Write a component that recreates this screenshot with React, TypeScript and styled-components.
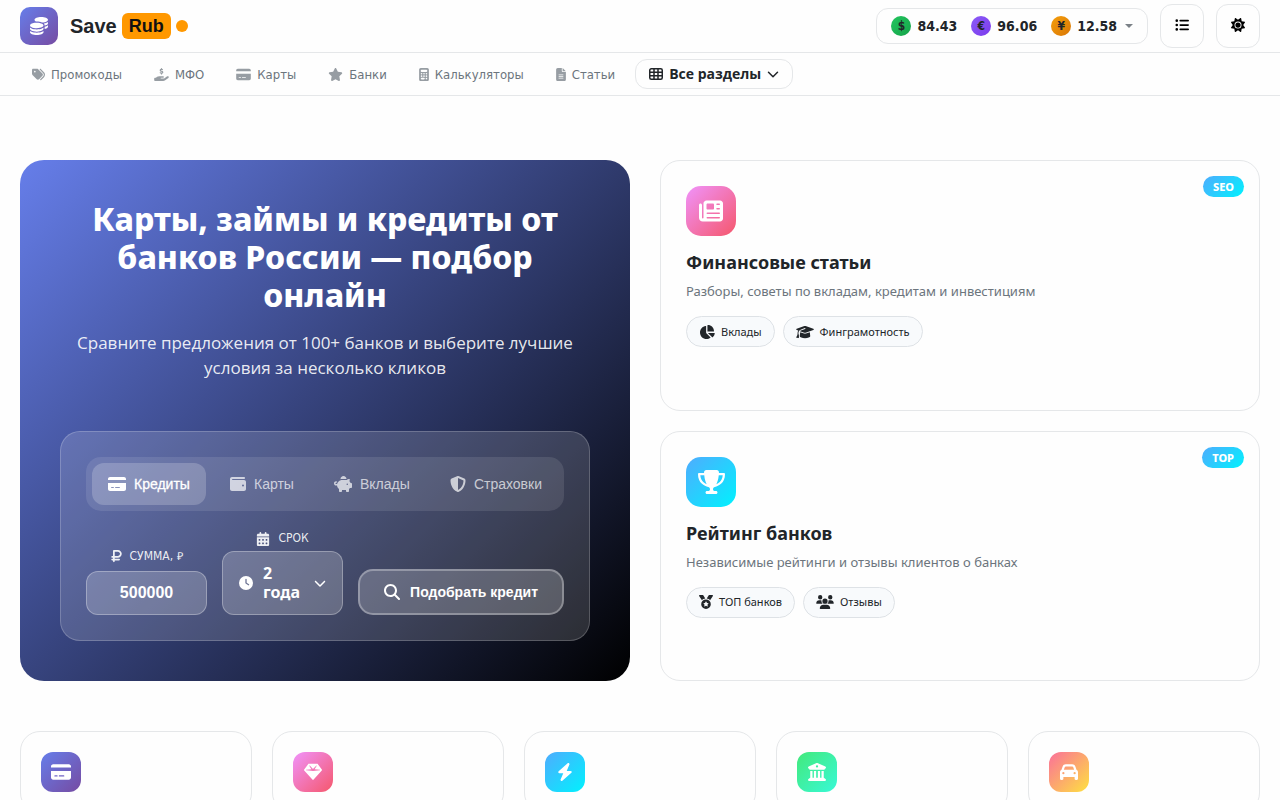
import React, { useState } from "react";
import styled, { createGlobalStyle, css } from "styled-components";
import {
  FaBolt,
  FaBuildingColumns,
  FaCalculator,
  FaCalendarDays,
  FaCar,
  FaChartPie,
  FaChevronDown,
  FaClock,
  FaCoins,
  FaCreditCard,
  FaFileLines,
  FaGem,
  FaGraduationCap,
  FaHandHoldingDollar,
  FaListUl,
  FaMagnifyingGlass,
  FaMedal,
  FaNewspaper,
  FaPiggyBank,
  FaRubleSign,
  FaShieldHalved,
  FaStar,
  FaSun,
  FaTags,
  FaTrophy,
  FaUsers,
  FaWallet,
} from "react-icons/fa6";

const ui = `"DejaVu Sans Condensed", "DejaVu Sans", sans-serif`;
const text = `"Noto Sans", sans-serif`;
const control = `"Liberation Sans", Arial, sans-serif`;

const gradients = {
  violet: "linear-gradient(135deg, #667eea, #764ba2)",
  pink: "linear-gradient(135deg, #f093fb, #f5576c)",
  cyan: "linear-gradient(135deg, #4facfe, #00f2fe)",
  green: "linear-gradient(135deg, #43e97b, #38f9d7)",
  sunset: "linear-gradient(135deg, #fa709a, #fee140)",
};
type Tone = keyof typeof gradients;

const GlobalStyle = createGlobalStyle`
  * { box-sizing: border-box; }
  body { margin: 0; background: #fefefe; color: #212529; font-family: ${ui}; }
  h1, h2, p { margin: 0; }
  a { color: inherit; text-decoration: none; }
  button { cursor: pointer; }
`;

/* Width of an icon's box relative to its height, after the icon's view box. */
const ratios = { narrow: 0.75, square: 1, wide: 1.125, extra: 1.25 };
type Shape = keyof typeof ratios;

const Glyph = styled.span<{ $size: number; $shape?: Shape; $dim?: boolean }>`
  display: inline-flex;
  flex: none;
  opacity: ${(p) => (p.$dim ? 0.7 : 1)};
  svg {
    display: block;
    width: ${(p) => Math.round(p.$size * ratios[p.$shape ?? "square"])}px;
    height: ${(p) => p.$size}px;
  }
`;

const Header = styled.header`
  display: flex;
  align-items: center;
  justify-content: space-between;
  padding: 4px 20px;
  border-bottom: 1px solid #e5e7e9;
`;

const Logo = styled.a`
  display: flex;
  align-items: center;
  font: 700 20px/26px ${control};
`;

const LogoMark = styled.span`
  display: flex;
  align-items: center;
  justify-content: center;
  width: 38px;
  height: 38px;
  margin-right: 12px;
  border-radius: 10px;
  background: ${gradients.violet};
  color: #fff;
`;

const LogoBadge = styled.span`
  margin-left: 5px;
  padding: 0 7px;
  border-radius: 6px;
  background: #ff9800;
  color: #111;
  font-size: 18px;
`;

const LogoDot = styled.span`
  width: 12px;
  height: 12px;
  margin-left: 5px;
  border-radius: 50%;
  background: #ff9800;
`;

const HeaderTools = styled.div`
  display: flex;
  align-items: center;
  gap: 12px;
`;

const outlined = css`
  border: 1px solid #e5e7e9;
  border-radius: 12px;
  background: #fefefe;
`;

const Rates = styled.button`
  ${outlined}
  display: flex;
  align-items: center;
  gap: 14px;
  height: 36px;
  padding: 0 14px;
  color: #212529;
  font: 700 14px/20px ${ui};
`;

const Rate = styled.span`
  display: flex;
  align-items: center;
  gap: 6px;
`;

const Coin = styled.span<{ $color: string }>`
  width: 20px;
  height: 20px;
  border-radius: 50%;
  background: ${(p) => p.$color};
  font-size: 12px;
  text-align: center;
`;

const Caret = styled.span`
  margin-left: -6px;
  border: 4px solid transparent;
  border-top-color: #7b8187;
  border-bottom: 0;
`;

const SquareButton = styled.button`
  ${outlined}
  display: flex;
  align-items: center;
  justify-content: center;
  width: 44px;
  height: 44px;
  padding: 0 0 2px;
  color: #000;
`;

const Nav = styled.nav`
  display: flex;
  align-items: center;
  gap: 8px;
  padding: 6px 20px;
  border-bottom: 1px solid #e5e7e9;
`;

const NavLink = styled.a`
  display: flex;
  align-items: center;
  gap: 6px;
  padding: 1px 12px 0;
  color: #6c757d;
  font-size: 13px;
  line-height: 20px;
`;

const AllSections = styled.button`
  ${outlined}
  display: flex;
  align-items: center;
  gap: 6px;
  height: 30px;
  padding: 0 13px;
  color: #212529;
  font: 700 14px/20px "Open Sans", sans-serif;
`;

const Main = styled.main`
  padding: 64px 20px 30px;
`;

const Intro = styled.section`
  display: grid;
  grid-template-columns: 61fr 60fr;
  gap: 30px;
`;

const Hero = styled.div`
  padding: 40px;
  border-radius: 24px;
  background: linear-gradient(135deg, #667eea, #000);
  color: #fff;
  text-align: center;
`;

const HeroTitle = styled.h1`
  font: 800 32px/38px ${text};
`;

const HeroLead = styled.p`
  margin: 16px 0 51px;
  color: rgba(255, 255, 255, 0.9);
  font: 400 17px/25px "Open Sans", sans-serif;
`;

const Panel = styled.form`
  padding: 25px;
  border: 1px solid rgba(255, 255, 255, 0.2);
  border-radius: 20px;
  background: rgba(255, 255, 255, 0.15);
`;

const Tabs = styled.div`
  display: flex;
  gap: 8px;
  margin-bottom: 20px;
  padding: 6px;
  border-radius: 15px;
  background: rgba(255, 255, 255, 0.1);
`;

const Tab = styled.button<{ $active: boolean }>`
  display: flex;
  flex: 1 1 auto;
  align-items: center;
  justify-content: center;
  gap: 8px;
  height: 42px;
  padding: 0;
  border: 0;
  border-radius: 12px;
  background: ${(p) => (p.$active ? "rgba(255, 255, 255, 0.2)" : "transparent")};
  color: ${(p) => (p.$active ? "#fff" : "rgba(255, 255, 255, 0.7)")};
  font: 400 14px/20px ${control};
  -webkit-text-stroke: ${(p) => (p.$active ? "0.3px #fff" : "0")};
`;

const Fields = styled.div`
  display: grid;
  grid-template-columns: 1fr 1fr auto;
  align-items: end;
  gap: 15px;
`;

const Field = styled.div`
  display: flex;
  flex-direction: column;
  align-items: stretch;
  gap: 5px;
`;

const FieldLabel = styled.label`
  display: flex;
  align-items: center;
  justify-content: center;
  gap: 8px;
  color: rgba(255, 255, 255, 0.9);
  font-size: 12px;
  line-height: 15px;
  text-transform: uppercase;
`;

const Ruble = styled.span`
  font: 400 11px/20px "Liberation Serif", serif;
`;

const frosted = css`
  border: 1px solid rgba(255, 255, 255, 0.3);
  border-radius: 12px;
  background: rgba(255, 255, 255, 0.2);
  color: #fff;
`;

const SumInput = styled.input`
  ${frosted}
  width: 100%;
  height: 44px;
  padding: 0 12px;
  font: 700 16px/20px ${control};
  text-align: center;
`;

const TermButton = styled.button`
  ${frosted}
  display: grid;
  grid-template-columns: auto 1fr auto;
  align-items: center;
  gap: 10px;
  height: 64px;
  padding: 0 16px;
  font: 700 16px/19px ${text};
  text-align: left;
`;

const SubmitButton = styled.button`
  ${frosted}
  display: flex;
  align-items: center;
  gap: 10px;
  height: 46px;
  padding: 0 24px;
  border-width: 2px;
  border-radius: 15px;
  font: 700 14px/20px ${control};
`;

const Side = styled.div`
  display: grid;
  grid-template-rows: 1fr 1fr;
  gap: 20px;
`;

const Card = styled.article`
  position: relative;
  padding: 25px;
  border: 1px solid #e5e7e9;
  border-radius: 20px;
`;

const IconTile = styled.span<{ $tone: Tone; $size: number }>`
  display: flex;
  align-items: center;
  justify-content: center;
  width: ${(p) => p.$size}px;
  height: ${(p) => p.$size}px;
  border-radius: ${(p) => (p.$size > 40 ? 15 : 12)}px;
  background: ${(p) => gradients[p.$tone]};
  color: #fff;
`;

const Badge = styled.span`
  position: absolute;
  top: 15px;
  right: 15px;
  padding: 0 10px;
  border-radius: 12px;
  background: ${gradients.cyan};
  color: #fff;
  font: 800 11px/21px ${text};
`;

const CardTitle = styled.h2`
  margin-top: 15px;
  font: 700 18px/22px ${text};
`;

const CardText = styled.p`
  margin: 8px 0 14px;
  color: #6c757d;
  font: 400 13px/21px ${text};
`;

const Chips = styled.div`
  display: flex;
  flex-wrap: wrap;
  gap: 8px;
`;

const Chip = styled.a`
  display: flex;
  align-items: center;
  gap: 6px;
  height: 31px;
  padding: 0 12px;
  border: 1px solid #dee2e6;
  border-radius: 16px;
  background: #f8fafc;
  font: 400 11px/20px ${text};
`;

const Services = styled.section`
  display: grid;
  grid-template-columns: repeat(5, 1fr);
  gap: 20px;
  margin-top: 50px;
`;

const ServiceCard = styled.a`
  padding: 20px;
  border: 1px solid #e5e7e9;
  border-radius: 20px;
`;

const GridIcon = () => (
  <svg viewBox="0 0 14 14" fill="none" stroke="currentColor" strokeWidth="1.5">
    <rect x="0.75" y="1.75" width="12.5" height="10.5" rx="1.5" />
    <path d="M1 5.25h12M1 8.75h12M5 2v10M9 2v10" />
  </svg>
);

const ChevronIcon = () => (
  <svg viewBox="0 0 12 12" fill="none" stroke="currentColor" strokeWidth="1.5" strokeLinecap="round" strokeLinejoin="round">
    <path d="M1.5 4.25 6 8.75l4.5-4.5" />
  </svg>
);

type Item = { label: string; icon: React.ReactNode; shape?: Shape };

const rates = [
  { sign: "$", value: "84.43", color: "linear-gradient(135deg, #22c55e, #16a34a)" },
  { sign: "€", value: "96.06", color: "linear-gradient(135deg, #8b5cf6, #7c3aed)" },
  { sign: "¥", value: "12.58", color: "linear-gradient(135deg, #f59e0b, #d97706)" },
];

const links: Item[] = [
  { label: "Промокоды", icon: <FaTags /> },
  { label: "МФО", icon: <FaHandHoldingDollar />, shape: "wide" },
  { label: "Карты", icon: <FaCreditCard />, shape: "wide" },
  { label: "Банки", icon: <FaStar />, shape: "wide" },
  { label: "Калькуляторы", icon: <FaCalculator />, shape: "narrow" },
  { label: "Статьи", icon: <FaFileLines />, shape: "narrow" },
];

const tabs: Item[] = [
  { label: "Кредиты", icon: <FaCreditCard />, shape: "wide" },
  { label: "Карты", icon: <FaWallet /> },
  { label: "Вклады", icon: <FaPiggyBank />, shape: "wide" },
  { label: "Страховки", icon: <FaShieldHalved /> },
];

const cards: {
  title: string;
  text: string;
  badge: string;
  tone: Tone;
  icon: React.ReactNode;
  shape?: Shape;
  chips: Item[];
}[] = [
  {
    title: "Финансовые статьи",
    text: "Разборы, советы по вкладам, кредитам и инвестициям",
    badge: "SEO",
    tone: "pink",
    icon: <FaNewspaper />,
    chips: [
      { label: "Вклады", icon: <FaChartPie />, shape: "wide" },
      { label: "Финграмотность", icon: <FaGraduationCap />, shape: "extra" },
    ],
  },
  {
    title: "Рейтинг банков",
    text: "Независимые рейтинги и отзывы клиентов о банках",
    badge: "TOP",
    tone: "cyan",
    icon: <FaTrophy />,
    shape: "wide",
    chips: [
      { label: "ТОП банков", icon: <FaMedal /> },
      { label: "Отзывы", icon: <FaUsers />, shape: "extra" },
    ],
  },
];

const services: { tone: Tone; icon: React.ReactNode; shape?: Shape }[] = [
  { tone: "violet", icon: <FaCreditCard />, shape: "wide" },
  { tone: "pink", icon: <FaGem /> },
  { tone: "cyan", icon: <FaBolt /> },
  { tone: "green", icon: <FaBuildingColumns /> },
  { tone: "sunset", icon: <FaCar /> },
];

export default function App() {
  const [tab, setTab] = useState(0);
  const [sum, setSum] = useState("500000");

  return (
    <>
      <GlobalStyle />
      <Header>
        <Logo href="#">
          <LogoMark>
            <Glyph $size={18}><FaCoins /></Glyph>
          </LogoMark>
          Save
          <LogoBadge>Rub</LogoBadge>
          <LogoDot />
        </Logo>
        <HeaderTools>
          <Rates type="button">
            {rates.map((r) => (
              <Rate key={r.sign}>
                <Coin $color={r.color}>{r.sign}</Coin>
                {r.value}
              </Rate>
            ))}
            <Caret />
          </Rates>
          <SquareButton type="button" aria-label="Список">
            <Glyph $size={14}><FaListUl /></Glyph>
          </SquareButton>
          <SquareButton type="button" aria-label="Тема">
            <Glyph $size={14}><FaSun /></Glyph>
          </SquareButton>
        </HeaderTools>
      </Header>
      <Nav>
        {links.map((l) => (
          <NavLink key={l.label} href="#">
            <Glyph $size={13} $shape={l.shape} $dim>{l.icon}</Glyph>
            {l.label}
          </NavLink>
        ))}
        <AllSections type="button">
          <Glyph $size={14}><GridIcon /></Glyph>
          Все разделы
          <Glyph $size={12}><ChevronIcon /></Glyph>
        </AllSections>
      </Nav>
      <Main>
        <Intro>
          <Hero>
            <HeroTitle>Карты, займы и кредиты от банков России — подбор онлайн</HeroTitle>
            <HeroLead>Сравните предложения от 100+ банков и выберите лучшие условия за несколько кликов</HeroLead>
            <Panel onSubmit={(e) => e.preventDefault()}>
              <Tabs>
                {tabs.map((t, i) => (
                  <Tab key={t.label} type="button" $active={i === tab} onClick={() => setTab(i)}>
                    <Glyph $size={16} $shape={t.shape}>{t.icon}</Glyph>
                    {t.label}
                  </Tab>
                ))}
              </Tabs>
              <Fields>
                <Field>
                  <FieldLabel htmlFor="sum">
                    <Glyph $size={14} $shape="narrow"><FaRubleSign /></Glyph>
                    <span>Сумма, <Ruble>₽</Ruble></span>
                  </FieldLabel>
                  <SumInput id="sum" value={sum} onChange={(e) => setSum(e.target.value)} />
                </Field>
                <Field>
                  <FieldLabel htmlFor="term">
                    <Glyph $size={14}><FaCalendarDays /></Glyph>
                    Срок
                  </FieldLabel>
                  <TermButton id="term" type="button">
                    <Glyph $size={14}><FaClock /></Glyph>
                    <span>2 года</span>
                    <Glyph $size={12}><FaChevronDown /></Glyph>
                  </TermButton>
                </Field>
                <SubmitButton type="submit">
                  <Glyph $size={16}><FaMagnifyingGlass /></Glyph>
                  Подобрать кредит
                </SubmitButton>
              </Fields>
            </Panel>
          </Hero>
          <Side>
            {cards.map((c) => (
              <Card key={c.title}>
                <Badge>{c.badge}</Badge>
                <IconTile $tone={c.tone} $size={50}>
                  <Glyph $size={24} $shape={c.shape}>{c.icon}</Glyph>
                </IconTile>
                <CardTitle>{c.title}</CardTitle>
                <CardText>{c.text}</CardText>
                <Chips>
                  {c.chips.map((chip) => (
                    <Chip key={chip.label} href="#">
                      <Glyph $size={14} $shape={chip.shape}>{chip.icon}</Glyph>
                      {chip.label}
                    </Chip>
                  ))}
                </Chips>
              </Card>
            ))}
          </Side>
        </Intro>
        <Services>
          {services.map((s) => (
            <ServiceCard key={s.tone} href="#">
              <IconTile $tone={s.tone} $size={40}>
                <Glyph $size={18} $shape={s.shape}>{s.icon}</Glyph>
              </IconTile>
            </ServiceCard>
          ))}
        </Services>
      </Main>
    </>
  );
}
